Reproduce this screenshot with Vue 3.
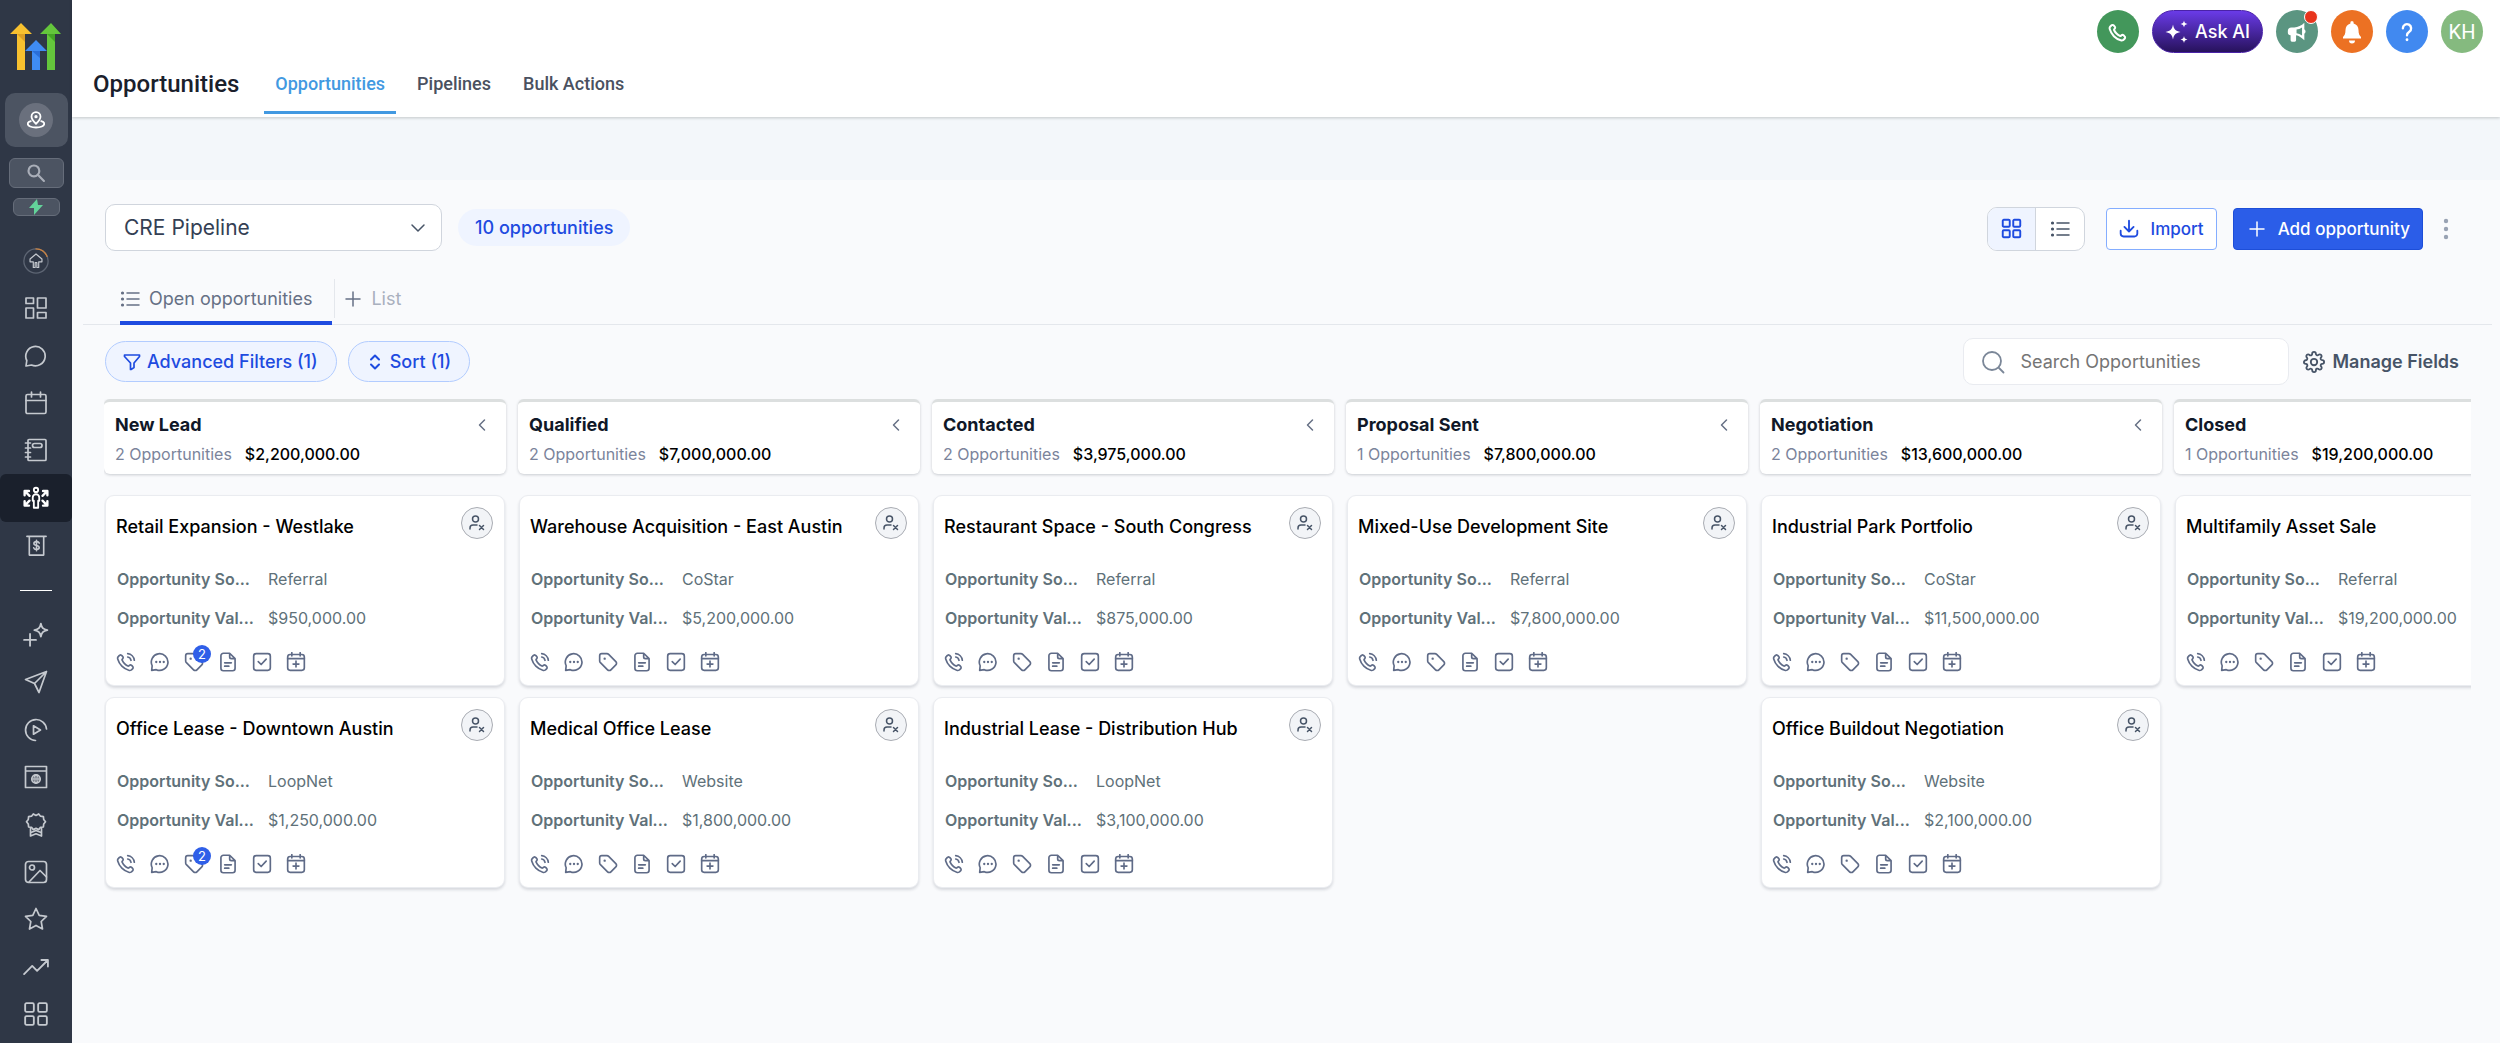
<template>
  <div class="layout">
    <aside class="sidebar">
      <a href="#" class="logo" aria-label="Home">
        <svg width="52" height="48" viewBox="0 0 52 48">
          <path fill="#f8c12f" d="M11 0 22 11H15v36H7V11H0z" />
          <path fill="#dc9f24" d="M7 11h8v8z" />
          <path fill="#64c63c" d="M41 0 51 11H45v36H37V11H30z" />
          <path fill="#43a425" d="M37 11h8v8z" />
          <path fill="#3f8cf4" d="M26 17 37 28H30v19H22V28H15z" />
          <path fill="#2a6ed8" d="M22 28h8v7z" />
        </svg>
      </a>
      <button type="button" class="location" aria-label="Switch location">
        <span class="location-circle">
          <svg class="icon" width="18" height="18" viewBox="0 0 24 24" stroke-width="2.4" v-html="icons.pin"></svg>
        </span>
      </button>
      <button type="button" class="side-search" aria-label="Search">
        <svg class="icon" width="20" height="20" viewBox="0 0 24 24" stroke-width="2.6">
          <circle cx="9.5" cy="9.5" r="6.5" /><path d="m14.5 14.5 7 7" />
        </svg>
      </button>
      <button type="button" class="side-bolt" aria-label="Quick actions">
        <svg width="16" height="16" viewBox="0 0 16 16">
          <path fill="#63d39a" d="M9 0 1 9h5v7l9-10H10z" />
        </svg>
      </button>

      <nav class="side-nav">
        <a
          v-for="item in sideItems"
          :key="item.icon"
          href="#"
          class="side-item"
          :class="{'active': item.active, 'divider': item.icon === 'divider'}"
          :aria-label="item.icon"
        >
          <svg
            v-if="item.icon !== 'divider'"
            class="icon"
            :width="item.size"
            :height="item.size"
            viewBox="0 0 24 24"
            stroke-width="1.7"
            v-html="icons[item.icon]"
          ></svg>
        </a>
      </nav>
    </aside>

    <main class="page">
      <header class="header">
        <div class="header-actions">
          <button type="button" class="round green" aria-label="Call">
            <svg class="icon" width="20" height="20" viewBox="0 0 24 24" stroke-width="2.4" v-html="icons.phone"></svg>
          </button>
          <button type="button" class="ask-ai">
            <svg width="24" height="24" viewBox="0 0 24 24" fill="#fff">
              <path d="M8 4.5c1 5 2.5 6.500 7.500 7.500-5 1-6.500 2.500-7.500 7.500-1-5-2.500-6.500-7.500-7.500 5-1 6.500-2.500 7.500-7.500z" />
              <path d="M19 .5c.5 2.300 1.200 3 3.500 3.500-2.300.5-3 1.200-3.500 3.500-.5-2.300-1.200-3-3.500-3.500 2.300-.5 3-1.200 3.500-3.500z" />
              <path d="M19 16c.5 2.300 1.200 3 3.500 3.500-2.300.5-3 1.200-3.500 3.500-.5-2.300-1.200-3-3.500-3.500 2.300-.5 3-1.200 3.500-3.500z" />
            </svg>
            Ask AI
          </button>
          <button type="button" class="round teal" aria-label="Announcements">
            <svg width="22" height="22" viewBox="0 0 24 24" fill="#fff">
              <path fill-rule="evenodd" d="M20 2v7a3 3 0 0 1 0 5v7c-3-3-6-5-9-5.500V21a1.500 1.500 0 0 1-1.500 1.500h-3A1.500 1.500 0 0 1 5 21v-5.500a3 3 0 0 1-3-3V11a4 4 0 0 1 4-4h3c4 0 8-2 11-5zm-2.500 5c-2 1.300-4 2.100-6 2.400v4c2 .3 4 1.200 6 2.500z" />
            </svg>
            <span class="dot"></span>
          </button>
          <button type="button" class="round orange" aria-label="Notifications">
            <svg width="24" height="24" viewBox="0 0 24 24" fill="#fff">
              <path d="M12 1a2 2 0 0 1 1.600 2.500c3 .8 4.900 3.300 4.900 6.500 0 4 1 5.500 2.500 7v1.500H3V17c1.500-1.500 2.500-3 2.500-7 0-3.200 1.900-5.700 4.900-6.500A2 2 0 0 1 12 1zM9 20.500h6a3 3 0 0 1-6 0z" />
            </svg>
          </button>
          <button type="button" class="round blue" aria-label="Help">
            <svg class="icon" width="22" height="22" viewBox="0 0 24 24" stroke-width="2.6">
              <path d="M7.500 8a4.500 4.500 0 1 1 7 3.700c-1.500 1-2.500 1.800-2.500 3.800" /><path d="M12 20.300v.2" stroke-width="3" />
            </svg>
          </button>
          <button type="button" class="round avatar">KH</button>
        </div>
        <div class="header-nav">
          <h1>Opportunities</h1>
          <a
            v-for="tab in tabs"
            :key="tab"
            href="#"
            class="tab"
            :class="{'selected': tab === activeTab}"
            @click.prevent="activeTab = tab"
          >{{ tab }}</a>
        </div>
      </header>

      <section class="content">
        <div class="toolbar">
          <div class="select-wrap">
            <select v-model="pipeline" aria-label="Pipeline">
              <option>CRE Pipeline</option>
            </select>
            <svg class="icon select-arrow" width="16" height="16" viewBox="0 0 16 16" stroke-width="1.5">
              <path d="m2 5 6 6 6-6" />
            </svg>
          </div>
          <span class="count">10 opportunities</span>

          <div class="toolbar-right">
            <div class="toggle">
              <button type="button" class="on" aria-label="Board view">
                <svg class="icon" width="21" height="21" viewBox="0 0 24 24" stroke-width="2.2" v-html="icons.grid"></svg>
              </button>
              <button type="button" aria-label="List view">
                <svg class="icon" width="20" height="20" viewBox="0 0 20 20" stroke-width="1.5" v-html="icons.list"></svg>
              </button>
            </div>
            <button type="button" class="btn-import">
              <svg class="icon" width="20" height="20" viewBox="0 0 24 24" stroke-width="2.2" v-html="icons.download"></svg>
              Import
            </button>
            <button type="button" class="btn-add">
              <svg class="icon" width="16" height="16" viewBox="0 0 16 16" stroke-width="1.5">
                <path d="M8 1v14M1 8h14" />
              </svg>
              Add opportunity
            </button>
            <button type="button" class="more" aria-label="More">
              <svg width="6" height="22" viewBox="0 0 6 22" fill="#98a2b3">
                <circle cx="3" cy="3" r="2.2" /><circle cx="3" cy="11" r="2.2" /><circle cx="3" cy="19" r="2.2" />
              </svg>
            </button>
          </div>
        </div>

        <div class="views">
          <a href="#" class="view current">
            <svg class="icon" width="20" height="20" viewBox="0 0 20 20" stroke-width="1.5" v-html="icons.list"></svg>
            Open opportunities
          </a>
          <span class="view-divider"></span>
          <a href="#" class="view add-view">
            <svg class="icon" width="16" height="16" viewBox="0 0 16 16" stroke-width="1.5">
              <path d="M8 1v14M1 8h14" />
            </svg>
            List
          </a>
        </div>

        <div class="filters">
          <button type="button" class="pill">
            <svg class="icon" width="18" height="18" viewBox="0 0 18 18" stroke-width="1.7">
              <path d="M1.500 2h15v1.500L11 10v4.500L8 16.500H7.500V10L1.500 3.500z" />
            </svg>
            Advanced Filters (1)
          </button>
          <button type="button" class="pill">
            <svg class="icon" width="18" height="18" viewBox="0 0 18 18" stroke-width="2">
              <path d="m5 6.500 4-4 4 4M5 11.500l4 4 4-4" />
            </svg>
            Sort (1)
          </button>
          <label class="search">
            <svg class="icon" width="24" height="24" viewBox="0 0 24 24" stroke-width="1.8">
              <circle cx="11" cy="11" r="9" /><path d="m18 18 4.500 4.500" />
            </svg>
            <input v-model="query" type="text" placeholder="Search Opportunities" aria-label="Search Opportunities">
          </label>
          <button type="button" class="manage">
            <svg class="icon" width="22" height="22" viewBox="0 0 24 24" stroke-width="2" v-html="icons.gear"></svg>
            Manage Fields
          </button>
        </div>

        <div class="board">
          <div v-for="column in columns" :key="column.name" class="column">
            <div class="column-head">
              <div class="column-title">
                <h2>{{ column.name }}</h2>
                <button type="button" aria-label="Collapse">
                  <svg class="icon" width="14" height="14" viewBox="0 0 14 14" stroke-width="1.5">
                    <path d="M9.500 2 4.500 7l5 5" />
                  </svg>
                </button>
              </div>
              <div class="column-sub">
                <span>{{ column.cards.length }} Opportunities</span>
                <strong>{{ column.total }}</strong>
              </div>
            </div>

            <article v-for="card in column.cards" :key="card.title" class="card">
              <div class="card-top">
                <h3>{{ card.title }}</h3>
                <button type="button" class="owner" aria-label="Assign owner">
                  <svg class="icon" width="16" height="16" viewBox="0 0 16 16" stroke-width="1.5">
                    <circle cx="6.5" cy="4" r="3" /><path d="M1 14v-1a3 3 0 0 1 3-3h4M10.500 10.500l4 4M14.500 10.500l-4 4" />
                  </svg>
                </button>
              </div>
              <dl class="fields">
                <dt>Opportunity So...</dt>
                <dd>{{ card.source }}</dd>
                <dt>Opportunity Val...</dt>
                <dd>{{ card.value }}</dd>
              </dl>
              <div class="card-actions">
                <button v-for="name in cardIcons" :key="name" type="button" :aria-label="name">
                  <svg class="icon" width="20" height="20" viewBox="0 0 24 24" stroke-width="2" v-html="icons[name]"></svg>
                  <span v-if="name === 'tag' && card.tags" class="badge">{{ card.tags }}</span>
                </button>
              </div>
            </article>
          </div>
        </div>
      </section>
    </main>
  </div>
</template>


<script setup>
import { ref } from 'vue'

const tabs = ['Opportunities', 'Pipelines', 'Bulk Actions'];
const activeTab = ref('Opportunities');
const pipeline = ref('CRE Pipeline');
const query = ref('');

const handset = 'M10.2266 13.8631C9.02506 12.6615 8.07627 11.3028 7.38028 9.85323C7.32041 9.72854 7.29048 9.66619 7.26748 9.5873C7.18576 9.30695 7.24446 8.96269 7.41447 8.72526C7.46231 8.65845 7.51947 8.60129 7.63378 8.48698C7.98338 8.13737 8.15819 7.96257 8.27247 7.78679C8.70347 7.1239 8.70347 6.26932 8.27247 5.60643C8.15819 5.43065 7.98338 5.25585 7.63378 4.90624L7.43891 4.71137C6.90747 4.17993 6.64174 3.91421 6.35636 3.76987C5.7888 3.4828 5.11854 3.4828 4.55098 3.76987C4.2656 3.91421 3.99987 4.17993 3.46843 4.71137L3.3108 4.86901C2.78117 5.39863 2.51636 5.66344 2.31411 6.02348C2.08969 6.42298 1.92833 7.04347 1.9297 7.5017C1.93092 7.91464 2.01103 8.19687 2.17124 8.76131C3.03221 11.7947 4.65668 14.6571 7.04466 17.045C9.43264 19.433 12.295 21.0575 15.3284 21.9185C15.8928 22.0787 16.1751 22.1588 16.588 22.16C17.0462 22.1614 17.6667 22 18.0662 21.7756C18.4263 21.5733 18.6911 21.3085 19.2207 20.7789L19.3783 20.6213C19.9098 20.0898 20.1755 19.8241 20.3198 19.5387C20.6069 18.9712 20.6069 18.3009 20.3198 17.7333C20.1755 17.448 19.9098 17.1822 19.3783 16.6508L19.1835 16.4559C18.8339 16.1063 18.6591 15.9315 18.4833 15.8172C17.8204 15.3862 16.9658 15.3862 16.3029 15.8172C16.1271 15.9315 15.9523 16.1063 15.6027 16.4559C15.4884 16.5702 15.4312 16.6274 15.3644 16.6752C15.127 16.8453 14.7828 16.904 14.5024 16.8222C14.4235 16.7992 14.3612 16.7693 14.2365 16.7094C12.7869 16.0134 11.4282 15.0646 10.2266 13.8631Z';

const icons = {
  pin: '<path d="M12 17c3.500-3.500 6-6 6-9.500a6 6 0 0 0-12 0C6 11 8.500 13.500 12 17z"/><circle cx="12" cy="7.5" r="1"/><path d="M5 13.500c-2.500.8-4 2-4 3.500 0 3 5 5 11 5s11-2 11-5c0-1.500-1.500-2.700-4-3.500"/>',
  launch: '<circle cx="12" cy="12" r="11.2" stroke="#5d6573" stroke-width="1.2"/><path d="M12 .8a11.200 11.200 0 0 1 10.200 7" stroke="#c98242" stroke-width="1.2"/><path d="M12 5.500 6.500 10.200v2.600h3V18h1.700v-4.500h1.600V18h1.700v-5.200h3v-2.600z" stroke-width="1.1"/>',
  dashboard: '<path d="M2 2h7.500v5.500H2zM13.500 2H22v10h-8.500zM2 12h7.500v10H2zM13.500 16.500H22V22h-8.500z"/>',
  chat: '<path d="M2 22l.8-5.500A9.700 9.700 0 1 1 7.500 21z"/>',
  calendar: '<rect x="2" y="3.5" width="20" height="19" rx="1.5"/><path d="M2 9.500h20M7.500 1v5M16.500 1v5"/>',
  contacts: '<rect x="4" y="1.5" width="18" height="21" rx="1"/><rect x="8.5" y="5.5" width="9.5" height="4" rx="2"/><path d="M1.500 5h5M1.500 10h5M1.500 14.500h5M1.500 19h5"/>',
  opportunities: '<circle cx="12" cy="4.5" r="2"/><path d="M12 8.500a3 3 0 0 1 3 3v3h-1v6.500h-4v-6.500H9v-3a3 3 0 0 1 3-3z"/><path d="m2 6 4 4M1.500 9.500v-4h4M22 6l-4 4M22.500 9.500v-4h-4M2 18.500l4-4M1.500 15v4h4M22 18.500l-4-4M22.500 15v4h-4" stroke-width="2.2"/>',
  payments: '<path d="M2 2.500h20M4.500 2.500V22h15V2.500"/><path d="M14.800 9.500c-.3-1-1.300-1.600-2.800-1.600-1.700 0-2.700.8-2.700 2 0 2.900 5.500 1.400 5.500 4.300 0 1.200-1.100 2-2.800 2-1.500 0-2.600-.6-2.900-1.700M12 6.500v11"/>',
  ai: '<path d="M16.500 1.500c.8 3.900 2 5.200 6 6-4 .8-5.200 2.100-6 6-.8-3.900-2-5.200-6-6 4-.8 5.200-2.100 6-6zM6.500 11v11M1 16.500h11"/>',
  send: '<path d="M22.500 1.500 1.500 9.500l9 4zM22.500 1.500 15 22.500l-4.500-9z"/>',
  video: '<path d="M22.500 11A10.500 10.500 0 1 0 11.500 22.500"/><path d="M9.500 7.800v8.400l7-4.200z"/>',
  sites: '<path d="M1.500 1.500h21v21h-21zM1.500 6h21"/><circle cx="12" cy="14" r="4.2"/><path d="M12 9.800v8.400M7.800 14h8.400" stroke-width="1.2"/><ellipse cx="12" cy="14" rx="2" ry="4.2" stroke-width="1.2"/>',
  badge: '<path d="M12 2.500 14.700 1l1.800 2.200 2.900.4.300 2.900 1.800 2.300-1.800 2.300-.3 2.900-2.900.4-1.800 2.200-2.700-1.200-2.700 1.200-1.800-2.200-2.900-.4-.3-2.900L2.500 8.800l1.800-2.300.3-2.900 2.900-.4L9.300 1z"/><path d="M6.500 15.500v7.500l5.500-2.200 5.500 2.200v-7.500M7 19.500l5-2 5 2"/>',
  media: '<rect x="1.5" y="1.5" width="21" height="21" rx="3"/><circle cx="8" cy="7.5" r="2.5"/><path d="M5 22 16 10.500l6.500 6.500"/>',
  star: '<path d="m12 1.500 3.200 6.900 7.300 1-5.300 5.100 1.300 7.500-6.500-3.600L5.500 22l1.300-7.500-5.300-5.100 7.300-1z"/>',
  trend: '<path d="m1 18.500 7.500-7.500 4.500 4.500L22.500 6M17 5.500h6v6"/>',
  grid: '<rect x="2" y="2" width="8" height="8" rx="1.2"/><rect x="14" y="2" width="8" height="8" rx="1.2"/><rect x="2" y="14" width="8" height="8" rx="1.2"/><rect x="14" y="14" width="8" height="8" rx="1.2"/>',
  list: '<path d="M7 4h12M7 10h12M7 16h12"/><path d="M2.500 4h.01M2.500 10h.01M2.500 16h.01" stroke-width="3.2"/>',
  download: '<path d="M2 14v3.500A3.500 3.500 0 0 0 5.500 21h13a3.500 3.500 0 0 0 3.500-3.500V14M12 2v13M6.500 9.500 12 15l5.500-5.500"/>',
  gear: '<circle cx="12" cy="12" r="3.5"/><path d="M19.4 15a1.65 1.65 0 0 0 .33 1.82l.06.06a2 2 0 0 1 0 2.83 2 2 0 0 1-2.83 0l-.06-.06a1.65 1.65 0 0 0-1.82-.33 1.65 1.65 0 0 0-1 1.51V21a2 2 0 0 1-2 2 2 2 0 0 1-2-2v-.09A1.65 1.65 0 0 0 9 19.4a1.65 1.65 0 0 0-1.82.33l-.06.06a2 2 0 0 1-2.83 0 2 2 0 0 1 0-2.83l.06-.06a1.65 1.65 0 0 0 .33-1.82 1.65 1.65 0 0 0-1.51-1H3a2 2 0 0 1-2-2 2 2 0 0 1 2-2h.09A1.65 1.65 0 0 0 4.6 9a1.65 1.65 0 0 0-.33-1.82l-.06-.06a2 2 0 0 1 0-2.83 2 2 0 0 1 2.83 0l.06.06a1.65 1.65 0 0 0 1.82.33H9a1.65 1.65 0 0 0 1-1.51V3a2 2 0 0 1 2-2 2 2 0 0 1 2 2v.09a1.65 1.65 0 0 0 1 1.51 1.65 1.65 0 0 0 1.82-.33l.06-.06a2 2 0 0 1 2.83 0 2 2 0 0 1 0 2.83l-.06.06a1.65 1.65 0 0 0-.33 1.82V9a1.65 1.65 0 0 0 1.51 1H21a2 2 0 0 1 2 2 2 2 0 0 1-2 2h-.09a1.65 1.65 0 0 0-1.51 1z"/>',
  phone: `<path d="${handset}"/>`,
  call: `<path d="M14.050 6A5 5 0 0 1 18 9.950M14.050 2A9 9 0 0 1 22 9.940"/><path d="${handset}"/>`,
  message: '<path d="M2 22l.6-5.500A10 10 0 1 1 7.500 21.200z"/><path d="M7.500 12h.01M12 12h.01M16.500 12h.01" stroke-width="2.8"/>',
  tag: '<path d="M2 4.500A2.500 2.500 0 0 1 4.500 2h6.200a3 3 0 0 1 2.100.9l8.600 8.600a2.800 2.800 0 0 1 0 4l-5.900 5.900a2.800 2.800 0 0 1-4 0L2.900 12.800a3 3 0 0 1-.9-2.100z"/><path d="M8 8h.01" stroke-width="2.8"/>',
  note: '<path d="M14 1.500H6.500a3 3 0 0 0-3 3v15a3 3 0 0 0 3 3h11a3 3 0 0 0 3-3V8zM14 1.500V6a2 2 0 0 0 2 2h4.500M8 13h8M8 17h5"/>',
  task: '<rect x="2" y="2" width="20" height="20" rx="3"/><path d="m7.500 11.500 3.500 3.500 6-6.500"/>',
  appointment: '<rect x="2" y="3" width="20" height="19" rx="3"/><path d="M2 8h20M7 .8v4M17 .8v4M12 11v7M8.500 14.500h7"/>',
};

const sideItems = [
  { icon: 'launch', size: 26 },
  { icon: 'dashboard', size: 24 },
  { icon: 'chat', size: 24 },
  { icon: 'calendar', size: 24 },
  { icon: 'contacts', size: 24 },
  { icon: 'opportunities', size: 26, active: true },
  { icon: 'payments', size: 23 },
  { icon: 'divider' },
  { icon: 'ai', size: 26 },
  { icon: 'send', size: 24 },
  { icon: 'video', size: 24 },
  { icon: 'sites', size: 24 },
  { icon: 'badge', size: 24 },
  { icon: 'media', size: 24 },
  { icon: 'star', size: 24 },
  { icon: 'trend', size: 26 },
  { icon: 'grid', size: 26 },
];

const cardIcons = ['call', 'message', 'tag', 'note', 'task', 'appointment'];

const columns = ref([
  {
    name: 'New Lead',
    total: '$2,200,000.00',
    cards: [
      { title: 'Retail Expansion - Westlake', source: 'Referral', value: '$950,000.00', tags: 2 },
      { title: 'Office Lease - Downtown Austin', source: 'LoopNet', value: '$1,250,000.00', tags: 2 },
    ],
  },
  {
    name: 'Qualified',
    total: '$7,000,000.00',
    cards: [
      { title: 'Warehouse Acquisition - East Austin', source: 'CoStar', value: '$5,200,000.00' },
      { title: 'Medical Office Lease', source: 'Website', value: '$1,800,000.00' },
    ],
  },
  {
    name: 'Contacted',
    total: '$3,975,000.00',
    cards: [
      { title: 'Restaurant Space - South Congress', source: 'Referral', value: '$875,000.00' },
      { title: 'Industrial Lease - Distribution Hub', source: 'LoopNet', value: '$3,100,000.00' },
    ],
  },
  {
    name: 'Proposal Sent',
    total: '$7,800,000.00',
    cards: [
      { title: 'Mixed-Use Development Site', source: 'Referral', value: '$7,800,000.00' },
    ],
  },
  {
    name: 'Negotiation',
    total: '$13,600,000.00',
    cards: [
      { title: 'Industrial Park Portfolio', source: 'CoStar', value: '$11,500,000.00' },
      { title: 'Office Buildout Negotiation', source: 'Website', value: '$2,100,000.00' },
    ],
  },
  {
    name: 'Closed',
    total: '$19,200,000.00',
    cards: [
      { title: 'Multifamily Asset Sale', source: 'Referral', value: '$19,200,000.00' },
    ],
  },
]);
</script>

<style>
body {
  margin: 0;
  background: #f9fafc;
}
</style>

<style scoped>
* {
  box-sizing: border-box;
}
.layout {
  display: flex;
  min-height: 100vh;
  font-family: Inter, "Liberation Sans", sans-serif;
  color: #101828;
}
button {
  display: inline-flex;
  align-items: center;
  justify-content: center;
  padding: 0;
  border: 0;
  background: none;
  color: inherit;
  font-family: inherit;
  cursor: pointer;
}
a {
  color: inherit;
  text-decoration: none;
}
h1, h2, h3, dl, dd {
  margin: 0;
}
.icon {
  flex: none;
  fill: none;
  stroke: currentColor;
  stroke-linecap: round;
  stroke-linejoin: round;
}

/* sidebar */
.sidebar {
  display: flex;
  flex-direction: column;
  align-items: center;
  flex: none;
  width: 72px;
  padding-bottom: 5px;
  background: #2f3746;
}
.logo {
  height: 48px;
  margin-top: 23px;
}
.location {
  width: 63px;
  height: 54px;
  margin-top: 22px;
  border-radius: 10px;
  background: #4c5462;
  color: #fff;
}
.location-circle {
  display: flex;
  align-items: center;
  justify-content: center;
  width: 34px;
  height: 34px;
  border-radius: 50%;
  background: #6a707d;
}
.side-search,
.side-bolt {
  border: 1px solid #666d7a;
  border-radius: 6px;
  background: #4c5462;
  color: #a9aeb8;
}
.side-search {
  width: 55px;
  height: 30px;
  margin-top: 11px;
}
.side-bolt {
  width: 47px;
  height: 18px;
  margin-top: 10px;
}
.side-nav {
  display: flex;
  flex-direction: column;
  flex: 1;
  width: 100%;
  margin-top: 21px;
}
.side-item {
  display: flex;
  align-items: center;
  justify-content: center;
  flex: 1;
  color: #c5c9cf;
}
.side-item.active {
  border-radius: 6px;
  background: #1a202c;
  color: #fff;
}
.side-item.divider {
  flex: none;
  height: 42px;
}
.side-item.divider::before {
  content: "";
  width: 32px;
  height: 1px;
  background: #fff;
}

/* header */
.page {
  flex: 1;
  min-width: 0;
  background: linear-gradient(#f3f7fa 180px, #f9fafc 180px);
}
.header {
  height: 117px;
  background: #fff;
  box-shadow: 0 1px 3px rgba(0,0,0,0.2);
  font-family: Roboto, sans-serif;
}
.header-actions {
  display: flex;
  justify-content: flex-end;
  gap: 13px;
  padding: 10px 17px 0 0;
}
.round {
  position: relative;
  width: 42px;
  height: 43px;
  border-radius: 50%;
  color: #fff;
}
.green { background: #43975b; }
.teal { background: #5b9581; }
.orange { background: #ec7123; }
.blue { background: #4189f0; }
.avatar {
  background: #85ba7f;
  font-size: 20px;
}
.dot {
  position: absolute;
  top: 0;
  right: 0;
  width: 14px;
  height: 14px;
  border: 1px solid #fff;
  border-radius: 50%;
  background: #e8341c;
}
.ask-ai {
  gap: 6px;
  height: 43px;
  padding: 0 12px;
  border: 1px solid #4a22a8;
  border-radius: 22px;
  background: linear-gradient(#6a3be8, #27125c);
  color: #fff;
  font-family: Inter, sans-serif;
  font-size: 18px;
  font-weight: 500;
}
.header-nav {
  display: flex;
  align-items: center;
  height: 61px;
  padding-left: 21px;
}
h1 {
  margin-right: 25px;
  color: #1a202c;
  font-size: 24px;
  font-weight: 500;
}
.tab {
  height: 61px;
  margin-right: 10px;
  padding: 0 11px;
  border-bottom: 3px solid transparent;
  color: #4a5160;
  font-size: 18px;
  font-weight: 500;
  line-height: 61px;
}
.tab.selected {
  border-bottom-color: #4299e1;
  color: #4299e1;
}

/* toolbar */
.content {
  padding: 87px 29px 0 32px;
}
.toolbar,
.toolbar-right,
.filters {
  display: flex;
  align-items: center;
}
.select-wrap {
  position: relative;
  margin-left: 1px;
}
select {
  appearance: none;
  width: 337px;
  height: 47px;
  padding: 0 48px 0 18px;
  border: 1px solid #d0d5dd;
  border-radius: 10px;
  background: #fff;
  color: #344054;
  font-family: inherit;
  font-size: 21px;
}
.select-arrow {
  position: absolute;
  top: 16px;
  right: 16px;
  color: #475467;
  pointer-events: none;
}
.count {
  margin-left: 16px;
  padding: 0 17px;
  border-radius: 19px;
  background: #eff4ff;
  color: #1e4be0;
  font-size: 18px;
  font-weight: 500;
  line-height: 37px;
}
.toolbar-right {
  margin-left: auto;
  padding: 2px 22px 0 0;
}
.toggle {
  display: flex;
  width: 98px;
  height: 44px;
  margin-right: 21px;
  border: 1px solid #d0d5dd;
  border-radius: 10px;
  background: #fff;
  overflow: hidden;
  color: #475467;
}
.toggle button {
  flex: 1;
}
.toggle .on {
  border-right: 1px solid #d0d5dd;
  background: #eff4ff;
  color: #1e4be0;
}
.btn-import,
.btn-add {
  height: 42px;
  border-radius: 4px;
  font-size: 17px;
  font-weight: 500;
}
.btn-import {
  gap: 12px;
  padding: 0 12px;
  border: 1px solid #84adff;
  background: #fff;
  color: #1e4be0;
}
.btn-add {
  gap: 13px;
  margin-left: 16px;
  padding: 0 12px 0 15px;
  border: 1px solid #1d4ed8;
  background: #2b5de8;
  color: #fff;
}
.more {
  margin-left: 20px;
}

/* saved views */
.views {
  display: flex;
  margin: 23px -21px 0 -21px;
  padding-left: 37px;
  box-shadow: inset 0 -1px #e4e7ec;
  font-size: 18px;
}
.view {
  display: flex;
  align-items: center;
  height: 51px;
  padding-top: 2px;
  border-bottom: 4px solid transparent;
  color: #667085;
}
.view.current {
  gap: 9px;
  padding-right: 20px;
  border-bottom-color: #1e4be0;
}
.view-divider {
  width: 1px;
  height: 39px;
  margin: 5px 10px 0 2px;
  background: #e4e7ec;
}
.add-view {
  gap: 10px;
  color: #a9b0be;
}
.add-view .icon {
  color: #667085;
}

/* filters */
.filters {
  margin-top: 13px;
  padding-right: 12px;
}
.pill {
  gap: 6px;
  height: 41px;
  margin-left: 1px;
  padding: 0 18px 0 17px;
  border: 1px solid #b2ccff;
  border-radius: 21px;
  background: #eff4ff;
  color: #1e4be0;
  font-size: 18px;
  font-weight: 500;
}
.pill + .pill {
  margin-left: 11px;
}
.search {
  display: flex;
  align-items: center;
  gap: 16px;
  width: 326px;
  height: 47px;
  margin-left: auto;
  padding: 0 17px;
  border: 1px solid #e9ebf0;
  border-radius: 10px;
  background: #fff;
  color: #7b8798;
}
.search input {
  flex: 1;
  min-width: 0;
  padding: 0;
  border: 0;
  outline: 0;
  background: none;
  color: #101828;
  font-family: inherit;
  font-size: 18px;
}
.search input::placeholder {
  color: #757575;
}
.manage {
  gap: 8px;
  margin-left: 14px;
  color: #475467;
  font-size: 18px;
  font-weight: 600;
}

/* board */
.board {
  display: flex;
  align-items: flex-start;
  gap: 12px;
  margin-top: 14px;
  padding-bottom: 20px;
  overflow: hidden;
}
.column {
  flex: none;
  width: 402px;
}
.column-head {
  margin-bottom: 21px;
  padding: 11px 17px 10px 11px;
  border-top: 3px solid #dcdfdf;
  border-radius: 6px;
  background: #fff;
  box-shadow: 0 1px 3px rgba(16,24,40,0.2);
}
.column-title {
  display: flex;
  justify-content: space-between;
  height: 24px;
}
h2 {
  font-size: 18px;
  font-weight: 700;
  line-height: 24px;
}
.column-title button {
  color: #667085;
}
.column-sub {
  display: flex;
  gap: 13px;
  margin-top: 7px;
  color: #7b849b;
  font-size: 16px;
  line-height: 20px;
}
.column-sub strong {
  color: #000;
  font-weight: 500;
}
.card {
  margin: 0 1px 11px;
  padding: 11px 11px 13px 10px;
  border: 1px solid #eaecf0;
  border-radius: 9px;
  background: #fff;
  box-shadow: 0 2px 3px rgba(16,24,40,0.14);
}
.card-top {
  display: flex;
  align-items: flex-end;
  justify-content: space-between;
}
h3 {
  color: #000;
  font-size: 18px;
  font-weight: 500;
  line-height: 24px;
}
.owner {
  width: 32px;
  height: 32px;
  border: 1px solid #a9acb3;
  border-radius: 50%;
  background: #f2f4f7;
  color: #475467;
}
.fields {
  display: grid;
  grid-template-columns: 151px 1fr;
  row-gap: 19px;
  margin-top: 30px;
  padding-left: 1px;
  color: #607179;
  font-size: 16px;
  line-height: 20px;
}
.fields dt {
  font-weight: 600;
}
.card-actions {
  display: flex;
  gap: 14px;
  height: 20px;
  margin-top: 24px;
  color: #5f6b87;
}
.card-actions button {
  position: relative;
}
.badge {
  position: absolute;
  top: -7px;
  left: 9px;
  width: 18px;
  height: 18px;
  border-radius: 50%;
  background: #2f5fe8;
  color: #fff;
  font-size: 13px;
  line-height: 18px;
  text-align: center;
}
</style>
